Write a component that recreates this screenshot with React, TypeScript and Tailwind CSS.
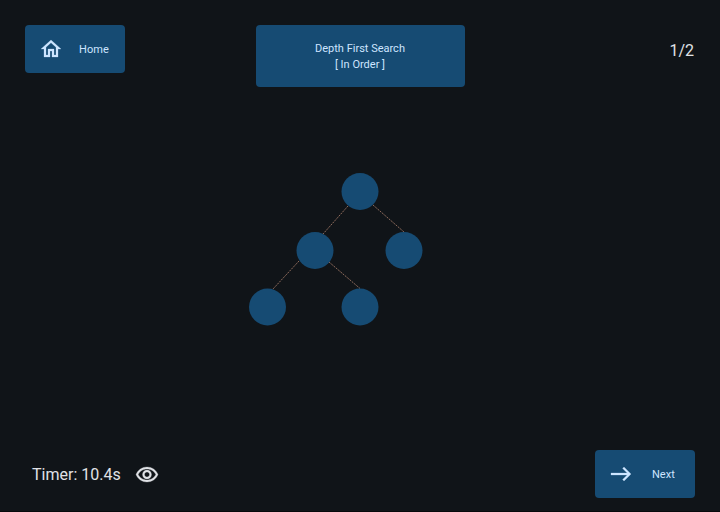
import React from "react";

type Point = { x: number; y: number };

const nodes: Point[] = [
  { x: 360, y: 191.5 },
  { x: 315, y: 250.5 },
  { x: 404, y: 250.5 },
  { x: 267.5, y: 307 },
  { x: 360, y: 307 },
];

const edges: [Point, Point][] = [
  [{ x: 348, y: 206 }, { x: 323, y: 234 }],
  [{ x: 373, y: 205 }, { x: 404, y: 232 }],
  [{ x: 299, y: 261 }, { x: 273, y: 289 }],
  [{ x: 329, y: 262 }, { x: 360, y: 288.5 }],
];

function Icon({ path, className = "" }: { path: string; className?: string }) {
  return (
    <svg
      viewBox="0 0 24 24"
      fill="currentColor"
      stroke="currentColor"
      strokeWidth="0.25"
      className={`size-6 shrink-0 ${className}`}
    >
      <path d={path} />
    </svg>
  );
}

const homePath =
  "M12 5.69l5 4.5V18h-2v-6H9v6H7v-7.81l5-4.5M12 3L2 12h3v8h6v-6h2v6h6v-8h3L12 3z";
const eastPath = "M15 5l-1.41 1.41L18.17 11H2v2h16.17l-4.59 4.59L15 19l7-7-7-7z";
const eyePath =
  "M12 6c3.79 0 7.17 2.13 8.82 5.5C19.17 14.87 15.79 17 12 17s-7.17-2.13-8.82-5.5C4.83 8.13 8.21 6 12 6m0-2C7 4 2.73 7.11 1 11.5 2.73 15.89 7 19 12 19s9.27-3.11 11-7.5C21.27 7.11 17 4 12 4zm0 5c1.38 0 2.5 1.12 2.5 2.5S13.38 14 12 14s-2.5-1.12-2.5-2.5S10.62 9 12 9m0-2c-2.48 0-4.5 2.02-4.5 4.5S9.52 16 12 16s4.5-2.02 4.5-4.5S14.48 7 12 7z";

function ActionButton({ label, path }: { label: string; path: string }) {
  return (
    <button className="flex h-12 w-[100px] items-center rounded bg-[#164b73] pl-3.5 text-[11px] tracking-[0.1px] text-[#cde5ff]">
      <Icon path={path} />
      <span className="flex-1 pt-0.5 text-center">{label}</span>
    </button>
  );
}

function Tree() {
  return (
    <svg viewBox="260 160 200 180" className="ml-[260px] h-[180px] w-[200px] overflow-visible">
      {edges.map(([a, b], i) => (
        <line key={i} x1={a.x} y1={a.y} x2={b.x} y2={b.y} stroke="#a67c69" strokeWidth="0.85" strokeDasharray="2 1" />
      ))}
      {nodes.map((n, i) => (
        <circle key={i} cx={n.x} cy={n.y} r="18.5" fill="#164b73" />
      ))}
    </svg>
  );
}

export default function App() {
  return (
    <main className="flex h-[512px] w-[720px] flex-col border-b border-[#08090c] bg-[#101418] font-['Roboto',sans-serif] text-[#e0e2e6]">
      <header className="grid h-[160px] grid-cols-[230.5px_209px_1fr] items-start pt-[25px] pr-[26px] pl-[25px]">
        <ActionButton label="Home" path={homePath} />
        <div className="flex h-[61.5px] flex-col items-center justify-center rounded bg-[#164b73] pt-0.5 text-[11px] leading-4 text-[#cde5ff]">
          <span>Depth First Search</span>
          <span>[ In Order ]</span>
        </div>
        <span className="pt-[14px] text-right text-base leading-6">1/2</span>
      </header>
      <Tree />
      <footer className="mt-[110px] flex h-12 items-center justify-between pr-[25.5px] pl-8">
        <div className="flex items-center">
          <span className="w-[102.5px] pt-0.5 text-base">Timer: 10.4s</span>
          <Icon path={eyePath} className="mt-0.5" />
        </div>
        <ActionButton label="Next" path={eastPath} />
      </footer>
    </main>
  );
}
